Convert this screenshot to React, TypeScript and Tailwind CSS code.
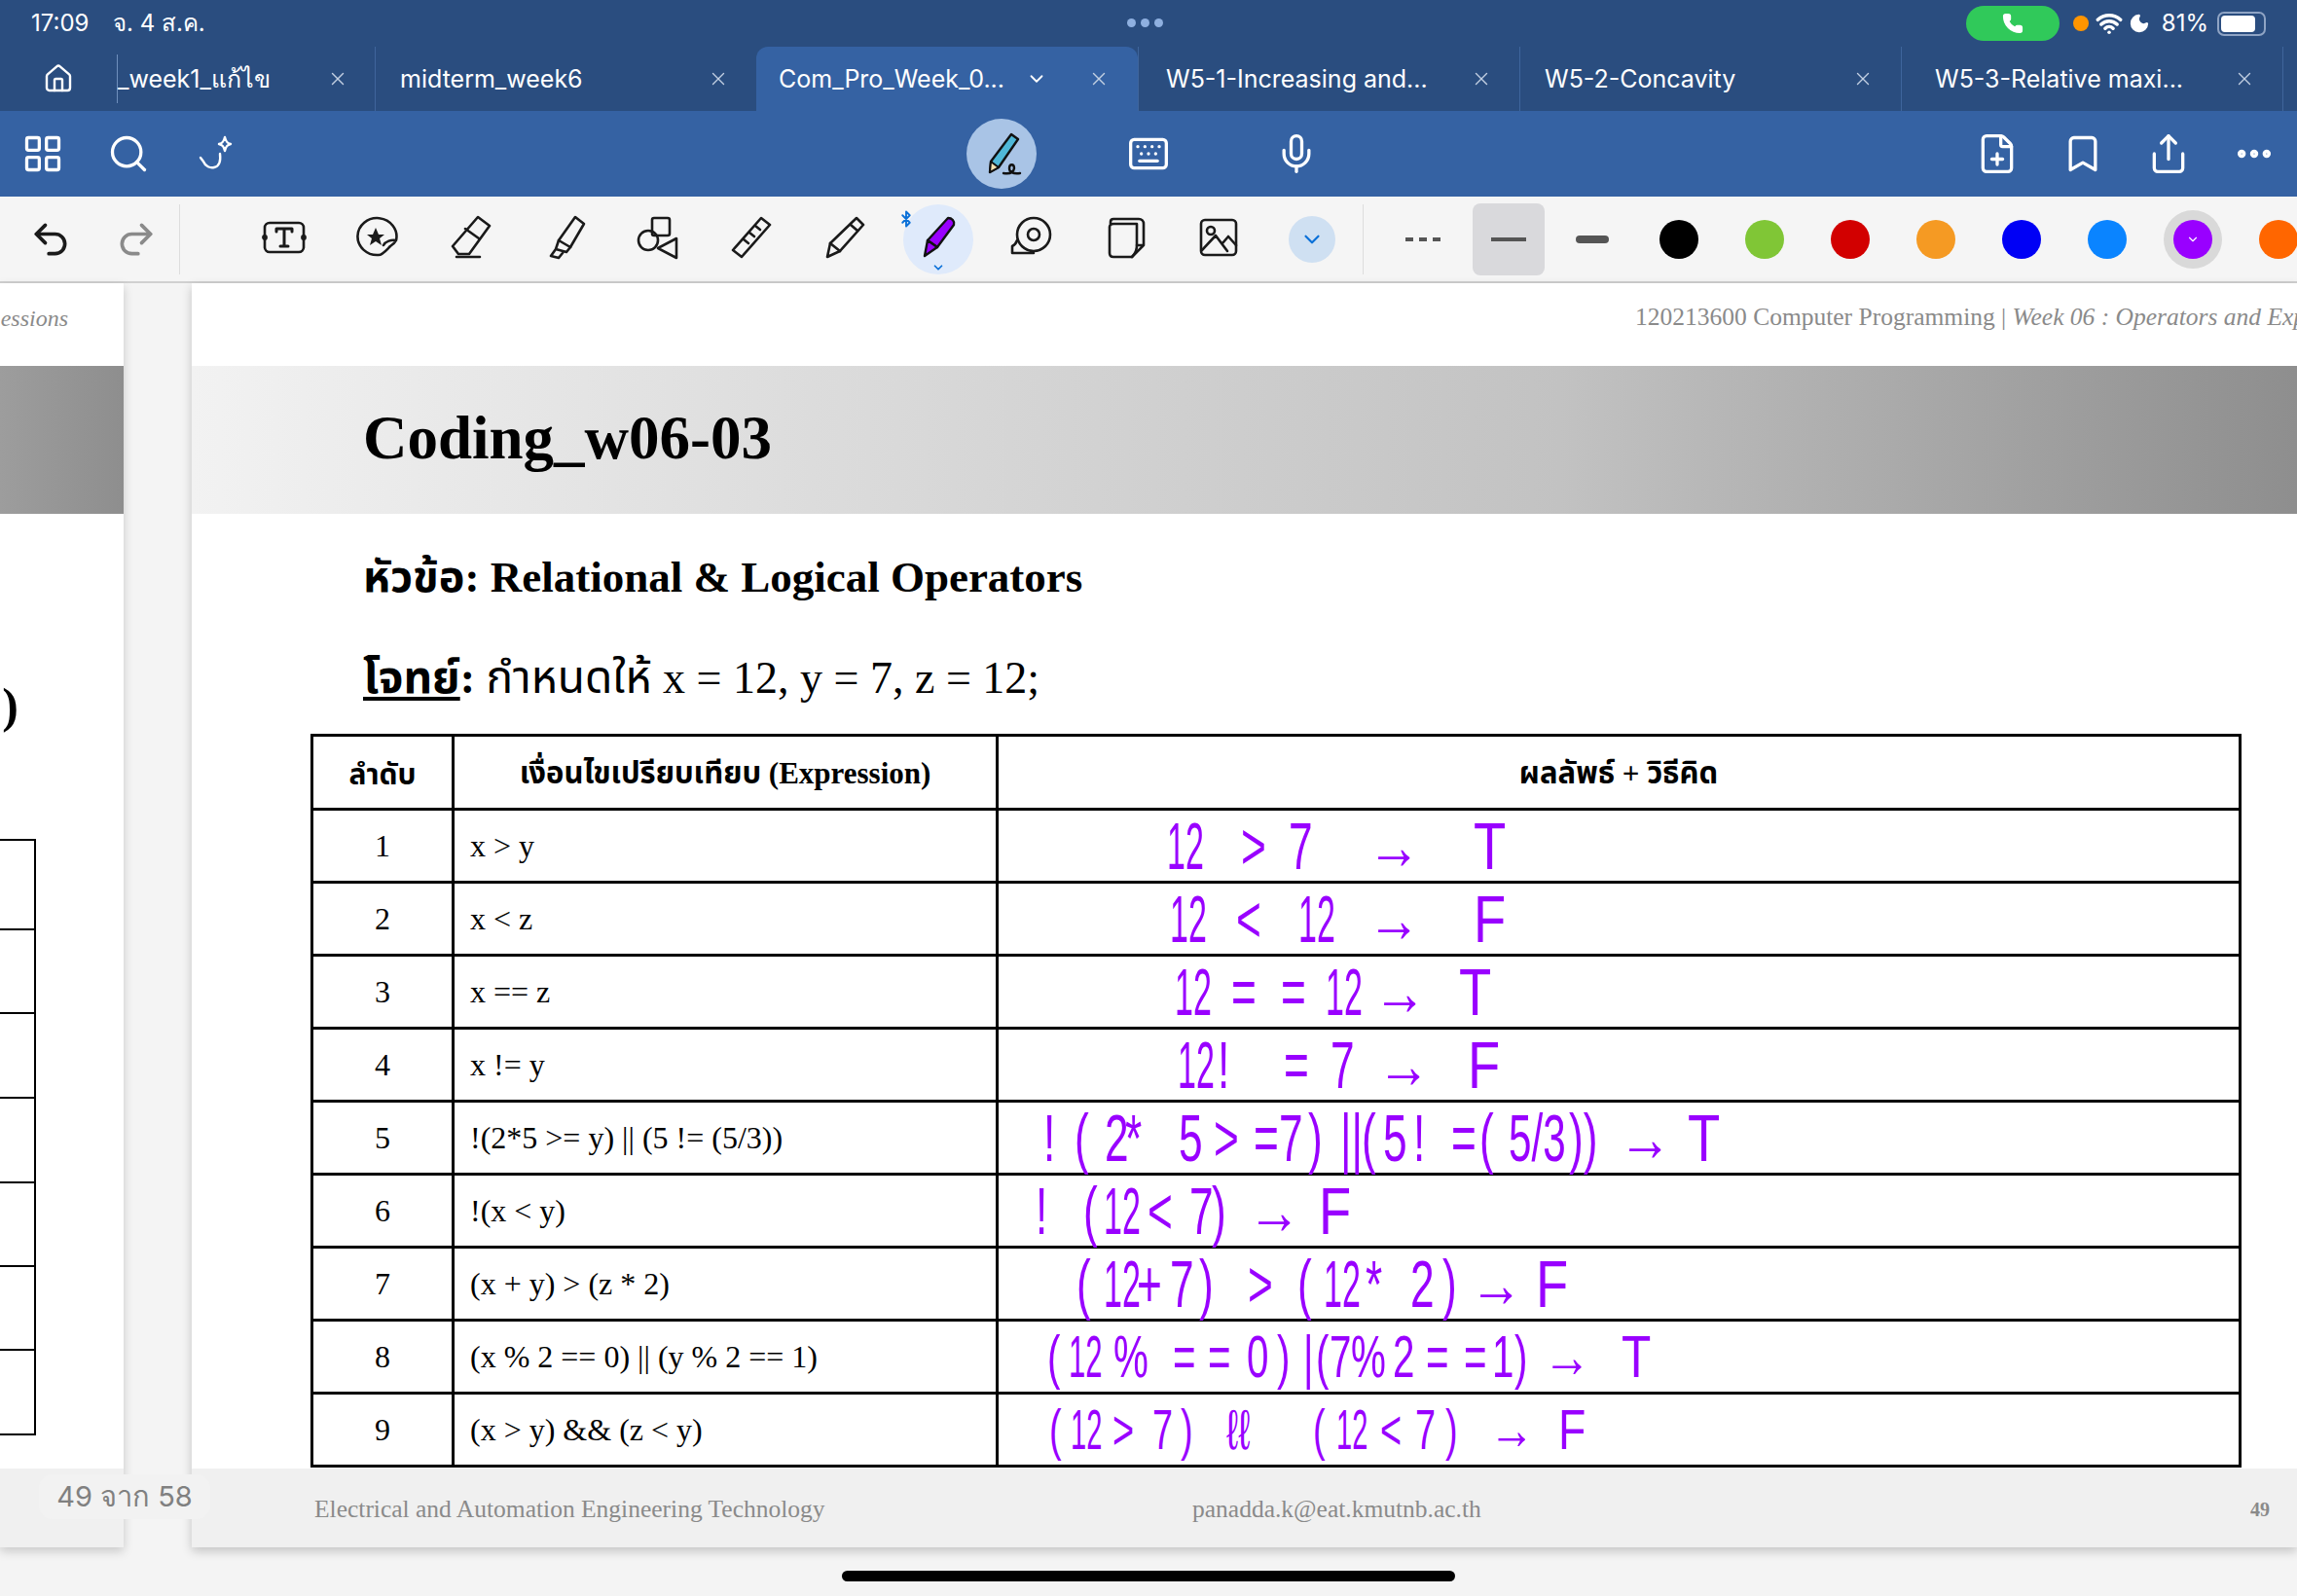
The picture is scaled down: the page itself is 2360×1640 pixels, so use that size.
import React from 'react';
import {
  Home, X, ChevronDown, LayoutGrid, Search, Keyboard, Mic, FilePlus, Bookmark, Share, Ellipsis,
  Undo2, Redo2, Phone, Wifi, Moon, Bluetooth,
} from 'lucide-react';

const serif = "font-['Liberation_Serif','Noto_Sans_Thai','Noto_Sans',serif]";

const tabs = [
  { title: 'midterm_week6', active: false, pad: 'pl-[25px]' },
  { title: 'Com_Pro_Week_0...', active: true, pad: 'pl-[23px]' },
  { title: 'W5-1-Increasing and...', active: false, pad: 'pl-[28px]' },
  { title: 'W5-2-Concavity', active: false, pad: 'pl-[25px]' },
  { title: 'W5-3-Relative maxi...', active: false, pad: 'pl-[34px]' },
];

type Tok = [string, string];
type InkRow = { no: number; expr: string; pad: string; size: string; tokens: Tok[] };

const rows: InkRow[] = [
  { no: 1, expr: 'x > y', pad: 'pl-[173px]', size: 'text-[68px]', tokens: [['12', 'w-[76px]'], ['>', 'w-[49px]'], ['7', 'w-[89px]'], ['→', 'w-[101px]'], ['T', 'w-[40px]']] },
  { no: 2, expr: 'x < z', pad: 'pl-[176px]', size: 'text-[68px]', tokens: [['12', 'w-[68px]'], ['<', 'w-[64px]'], ['12', 'w-[79px]'], ['→', 'w-[101px]'], ['F', 'w-[40px]']] },
  { no: 3, expr: 'x == z', pad: 'pl-[181px]', size: 'text-[68px]', tokens: [['12', 'w-[58px]'], ['=', 'w-[51px]'], ['=', 'w-[46px]'], ['12', 'w-[57px]'], ['→', 'w-[80px]'], ['T', 'w-[40px]']] },
  { no: 4, expr: 'x != y', pad: 'pl-[184px]', size: 'text-[68px]', tokens: [['12', 'w-[41px]'], ['!', 'w-[68px]'], ['=', 'w-[48px]'], ['7', 'w-[56px]'], ['→', 'w-[85px]'], ['F', 'w-[40px]']] },
  { no: 5, expr: '!(2*5 >= y) || (5 != (5/3))', pad: 'pl-[46px]', size: 'text-[68px]', tokens: [['!', 'w-[32px]'], ['(', 'w-[31px]'], ['2', 'w-[21px]'], ['*', 'w-[55px]'], ['5', 'w-[36px]'], ['>', 'w-[41px]'], ['=', 'w-[26px]'], ['7', 'w-[30px]'], [')', 'w-[33px]'], ['||', 'w-[22px]'], ['(', 'w-[22px]'], ['5', 'w-[31px]'], ['!', 'w-[39px]'], ['=', 'w-[29px]'], ['(', 'w-[30px]'], ['5/3', 'w-[62px]'], ['))', 'w-[59px]'], ['→', 'w-[63px]'], ['T', 'w-[40px]']] },
  { no: 6, expr: '!(x < y)', pad: 'pl-[38px]', size: 'text-[68px]', tokens: [['!', 'w-[49px]'], ['(', 'w-[21px]'], ['12', 'w-[45px]'], ['<', 'w-[43px]'], ['7', 'w-[23px]'], [')', 'w-[45px]'], ['→', 'w-[65px]'], ['F', 'w-[40px]']] },
  { no: 7, expr: '(x + y) > (z * 2)', pad: 'pl-[80px]', size: 'text-[68px]', tokens: [['(', 'w-[28px]'], ['12', 'w-[34px]'], ['+', 'w-[34px]'], ['7', 'w-[30px]'], [')', 'w-[50px]'], ['>', 'w-[51px]'], ['(', 'w-[27px]'], ['12', 'w-[43px]'], ['*', 'w-[46px]'], ['2', 'w-[33px]'], [')', 'w-[36px]'], ['→', 'w-[60px]'], ['F', 'w-[40px]']] },
  { no: 8, expr: '(x % 2 == 0) || (y % 2 == 1)', pad: 'pl-[50px]', size: 'text-[62px]', tokens: [['(', 'w-[22px]'], ['12', 'w-[46px]'], ['%', 'w-[61px]'], ['=', 'w-[36px]'], ['=', 'w-[40px]'], ['0', 'w-[31px]'], [')', 'w-[27px]'], ['|', 'w-[13px]'], ['(', 'w-[14px]'], ['7', 'w-[22px]'], ['%', 'w-[43px]'], ['2', 'w-[34px]'], ['=', 'w-[39px]'], ['=', 'w-[29px]'], ['1', 'w-[23px]'], [')', 'w-[37px]'], ['→', 'w-[73px]'], ['T', 'w-[40px]']] },
  { no: 9, expr: '(x > y) && (z < y)', pad: 'pl-[52px]', size: 'text-[58px]', tokens: [['(', 'w-[22px]'], ['12', 'w-[43px]'], ['>', 'w-[41px]'], ['7', 'w-[29px]'], [')', 'w-[47px]'], ['ℓℓ', 'w-[89px]'], ['(', 'w-[24px]'], ['12', 'w-[45px]'], ['<', 'w-[36px]'], ['7', 'w-[31px]'], [')', 'w-[53px]'], ['→', 'w-[63px]'], ['F', 'w-[40px]']] },
];

const swatches = ['bg-black', 'bg-[#80c636]', 'bg-[#d20000]', 'bg-[#f59a23]', 'bg-[#0000f5]', 'bg-[#0a84ff]'];

// ink tokens are squeezed to the tall, narrow shape of the handwriting
const inkShape = (text: string) => {
  if (text === '→') return "font-['Liberation_Sans',sans-serif] font-bold origin-left scale-x-[0.8] -translate-x-[8px]";
  if (text === '12') return 'origin-left scale-x-[0.5]';
  if (text === '5/3') return 'origin-left scale-x-[0.62]';
  if (text === 'T' || text === 'F') return 'origin-left scale-x-[0.8]';
  return 'origin-left scale-x-[0.65]';
};

const Sparkle = () => (
  <svg width="40" height="40" viewBox="0 0 40 40" fill="none" stroke="white" strokeWidth="2.4" strokeLinecap="round" strokeLinejoin="round">
    <path d="M4 24l3 4c2 5 7 7 11 6 5-1 7-6 6-14" />
    <path d="M29 3c1 4 2 6 6 7-4 1-5 3-6 7-1-4-2-6-6-7 4-1 5-3 6-7z" />
  </svg>
);

const PenCircleIcon = () => (
  <svg width="48" height="48" viewBox="0 0 48 48">
    <path d="M34 4l7 5-20 29-9 5 1-11z" fill="#4fb8d8" stroke="#111" strokeWidth="2.4" strokeLinejoin="round" />
    <path d="M13 32l8 6-9 5z" fill="#f4e2b0" stroke="#111" strokeWidth="2" strokeLinejoin="round" />
    <path d="M26 44c6 1 10 0 11-5 0-5-5-5-5 0 0 4 4 6 11 5" fill="none" stroke="#111" strokeWidth="2.4" strokeLinecap="round" />
  </svg>
);

const ToolIcon = ({ children }: { children: React.ReactNode }) => (
  <svg width="46" height="46" viewBox="0 0 46 46" fill="none" stroke="#1a1a1a" strokeWidth="2.6" strokeLinecap="round" strokeLinejoin="round">
    {children}
  </svg>
);

const tools: React.ReactNode[] = [
  <ToolIcon key="text">
    <rect x="3" y="8" width="40" height="30" rx="5" />
    <path d="M15 17v-3h16v3M23 14v18M19 32h8" strokeWidth="3" />
    <circle cx="3" cy="23" r="1.6" fill="#1a1a1a" />
    <circle cx="43" cy="23" r="1.6" fill="#1a1a1a" />
  </ToolIcon>,
  <ToolIcon key="sticker">
    <path d="M42 26A20 19 0 1 0 24 41c4 0 8-5 12-9 3-2 5-4 6-6-5-1-11 1-13 5" />
    <path d="M21 13l3 7h6l-5 4 2 7-6-4-6 4 2-7-5-4h6z" fill="#1a1a1a" stroke="none" />
  </ToolIcon>,
  <ToolIcon key="eraser">
    <path d="M30 2l12 9-21 29H10l-6-8z" />
    <path d="M17 14l14 10M8 43h24" />
  </ToolIcon>,
  <ToolIcon key="highlighter">
    <path d="M34 2l9 7-14 24-12-7z" />
    <path d="M17 26l-3 9 11 3 4-5M14 35l-5 7 8 2 4-5" />
  </ToolIcon>,
  <ToolIcon key="shapes">
    <rect x="17" y="3" width="18" height="18" rx="2" />
    <circle cx="13" cy="26" r="10" />
    <path d="M42 24v20L23 34z" />
  </ToolIcon>,
  <ToolIcon key="ruler">
    <path d="M33 3l9 7-29 33-9-7z" />
    <path d="M15 25l5 4M21 18l5 4M27 11l5 4" />
  </ToolIcon>,
  <ToolIcon key="pencil">
    <path d="M35 3l7 7-24 27-13 6 3-14z" />
    <path d="M8 29l10 8M29 10l7 6" />
  </ToolIcon>,
  <svg key="marker" width="46" height="46" viewBox="0 0 46 46">
    <path d="M33 3c4 0 7 3 6 7L22 33l-10-7z" fill="#9900ff" stroke="#111" strokeWidth="2.4" strokeLinejoin="round" />
    <path d="M12 26l10 7-13 9z" fill="#9900ff" stroke="#111" strokeWidth="2.4" strokeLinejoin="round" />
  </svg>,
  <ToolIcon key="tape">
    <circle cx="25" cy="20" r="17" />
    <circle cx="25" cy="20" r="6" />
    <path d="M8 26c-1 3-3 5-5 6v7h22" />
  </ToolIcon>,
  <ToolIcon key="sticky">
    <path d="M8 10V7c0-2 1-3 3-3h26c3 0 5 2 5 5v22l-12 12H11c-3 0-4-2-4-4V12c0-2 2-3 4-3h24v22l7 0" />
    <path d="M30 43c3-3 5-7 5-12" />
  </ToolIcon>,
  <ToolIcon key="image">
    <rect x="5" y="5" width="36" height="36" rx="4" />
    <circle cx="15" cy="16" r="4" />
    <path d="M6 36l14-15 12 16M27 29l6-7 8 9" />
  </ToolIcon>,
];

const LeftPage = () => (
  <div className="w-[127px] shrink-0 h-[1299px] bg-white flex flex-col overflow-hidden shadow-[0_4px_10px_rgba(0,0,0,0.18)]">
    <div className={`h-[71px] mb-[14px] flex items-center justify-end pr-[57px] text-[24px] italic text-[#8a8a8a] whitespace-nowrap ${serif}`}>
      essions
    </div>
    <div className="h-[152px] bg-gradient-to-r from-[#9d9d9d] to-[#8e8e8e]" />
    <div className={`h-[152px] mt-[70px] flex items-end justify-end pr-[108px] text-[50px] font-bold leading-none text-black whitespace-nowrap ${serif}`}>
      )
    </div>
    <div className="mt-[112px] w-[37px] border-[2px] border-l-0 border-black">
      <div className="h-[92px] border-b-[2px] border-black" />
      <div className="h-[86px] border-b-[2px] border-black" />
      <div className="h-[87px] border-b-[2px] border-black" />
      <div className="h-[87px] border-b-[2px] border-black" />
      <div className="h-[86px] border-b-[2px] border-black" />
      <div className="h-[86px] border-b-[2px] border-black" />
      <div className="h-[85px]" />
    </div>
    <div className="mt-auto h-[81px] bg-[#f0f0f0]" />
  </div>
);

const RightPage = () => (
  <div className={`flex-1 h-[1299px] bg-white flex flex-col overflow-hidden shadow-[0_4px_10px_rgba(0,0,0,0.2)] ${serif}`}>
    <div className="h-[71px] mb-[14px] shrink-0 flex items-center pl-[1483px] text-[25.5px] text-[#8a8a8a] whitespace-nowrap">
      120213600 Computer Programming |&nbsp;<i>Week 06 : Operators and Expressions</i>
    </div>
    <div className="h-[152px] shrink-0 flex items-center pl-[176px] pb-[3px] bg-gradient-to-r from-[#f2f2f2] via-[#c2c2c2] via-65% to-[#8e8e8e]">
      <h1 className="text-[63px] font-bold text-black leading-none">Coding_w06-03</h1>
    </div>
    <div className="pl-[176px] pt-[39px] h-[139px] text-[45px] font-bold text-black leading-[52px] whitespace-nowrap">
      หัวข้อ: Relational &amp; Logical Operators
    </div>
    <div className="pl-[176px] h-[87px] text-[46px] text-black leading-[60px] whitespace-nowrap">
      <b className="underline underline-offset-4">โจทย์</b><b>:</b> กำหนดให้ x = 12, y = 7, z = 12;
    </div>
    <div className="pl-[122px]">
      <table className="w-[1984px] table-fixed border-collapse border-[3px] border-black text-black">
        <thead>
          <tr className="h-[76px]">
            <th className="w-[145px] pt-[3px] border-[3px] border-black text-[30px] font-bold">ลำดับ</th>
            <th className="w-[559px] pt-[3px] border-[3px] border-black text-[31px] font-bold">เงื่อนไขเปรียบเทียบ (Expression)</th>
            <th className="pt-[3px] border-[3px] border-black text-[31px] font-bold">ผลลัพธ์ + วิธีคิด</th>
          </tr>
        </thead>
        <tbody>
          {rows.map((row) => (
            <tr key={row.no} className="h-[75px]">
              <td className="border-[3px] border-black text-center text-[32px] leading-none">{row.no}</td>
              <td className="border-[3px] border-black pl-[16px] text-[32px] leading-none">{row.expr}</td>
              <td className="border-[3px] border-black p-0">
                <div className={`flex items-center h-[69px] font-['Liberation_Sans_Narrow','Liberation_Sans',sans-serif] leading-none text-[#9900ff] ${row.pad} ${row.size}`}>
                  {row.tokens.map(([text, width], i) => (
                    <span key={i} className={`block shrink-0 whitespace-nowrap ${inkShape(text)} ${width}`}>{text}</span>
                  ))}
                </div>
              </td>
            </tr>
          ))}
        </tbody>
      </table>
    </div>
    <div className="mt-auto h-[81px] shrink-0 bg-[#f0f0f0] flex items-center pt-[3px] pl-[126px] pr-[28px] text-[25.5px] text-[#8a8a8a]">
      <span className="w-[902px]">Electrical and Automation Engineering Technology</span>
      <span>panadda.k@eat.kmutnb.ac.th</span>
      <span className="ml-auto text-[20px] font-bold">49</span>
    </div>
  </div>
);

export default function App() {
  return (
    <div className="relative w-[2360px] h-[1640px] overflow-hidden flex flex-col bg-[#f4f4f4] font-['Inter','Noto_Sans',sans-serif]">
      {/* status bar + tabs */}
      <div className="bg-[#2a4d7f] shrink-0">
        <div className="relative h-[48px] flex items-center pl-[32px] pr-[32px] text-white text-[24px]">
          <span className="w-[84px]">17:09</span>
          <span>จ. 4 ส.ค.</span>
          <div className="absolute left-[1158px] top-[19px] flex gap-[5px]">
            <span className="w-[9px] h-[9px] rounded-full bg-[#8fb0e0]" />
            <span className="w-[9px] h-[9px] rounded-full bg-[#8fb0e0]" />
            <span className="w-[9px] h-[9px] rounded-full bg-[#8fb0e0]" />
          </div>
          <div className="ml-auto flex items-center">
            <span className="w-[96px] h-[36px] rounded-full bg-[#30c95a] flex items-center justify-center">
              <Phone size={22} fill="white" stroke="white" />
            </span>
            <span className="ml-[14px] w-[16px] h-[16px] rounded-full bg-[#ff9500]" />
            <Wifi size={28} stroke="white" strokeWidth={3} className="ml-[7px]" />
            <Moon size={22} fill="white" stroke="white" className="ml-[6px]" />
            <span className="ml-[12px]">81%</span>
            <span className="ml-[9px] w-[50px] h-[25px] rounded-[7px] border-[2px] border-[#8fa4c4] p-[2px]">
              <span className="block w-[35px] h-full rounded-[4px] bg-white" />
            </span>
          </div>
        </div>
        <div className="flex h-[66px] text-[25px] text-white">
          <div className="w-[120px] flex items-center justify-center">
            <Home size={32} strokeWidth={1.8} />
          </div>
          <div className="w-[265px] flex items-center border-l border-[#6f8fbd] my-[8px] relative">
            <span className="whitespace-nowrap pt-[2px]">_week1_แก้ไข</span>
            <X size={22} strokeWidth={1.5} className="absolute left-[215px] text-[#c2cfe2]" />
          </div>
          {tabs.map((tab) =>
            tab.active ? (
              <div key={tab.title} className={`w-[392px] shrink-0 flex items-center bg-[#3562a3] rounded-t-[12px] relative ${tab.pad}`}>
                <span className="whitespace-nowrap pt-[2px]">{tab.title}</span>
                <ChevronDown size={22} className="absolute left-[277px]" />
                <X size={22} strokeWidth={1.5} className="absolute left-[341px] text-[#c2cfe2]" />
              </div>
            ) : (
              <div key={tab.title} className={`w-[392px] shrink-0 flex items-center border-l border-[#3f659c] relative ${tab.pad}`}>
                <span className="whitespace-nowrap pt-[2px]">{tab.title}</span>
                <X size={22} strokeWidth={1.5} className="absolute left-[341px] text-[#c2cfe2]" />
              </div>
            ),
          )}
          <div className="flex-1 border-l border-[#3f659c]" />
        </div>
      </div>

      {/* ribbon */}
      <div className="relative h-[88px] shrink-0 bg-[#3562a3] flex items-center text-white">
        <div className="flex items-center pl-[22px]">
          <LayoutGrid size={44} strokeWidth={1.8} />
          <Search size={44} strokeWidth={1.8} className="ml-[44px]" />
          <span className="ml-[48px]"><Sparkle /></span>
        </div>
        <div className="absolute left-[993px] top-[8px] w-[72px] h-[72px] rounded-full bg-[#a9c4e6] flex items-center justify-center">
          <PenCircleIcon />
        </div>
        <Keyboard size={44} strokeWidth={1.8} className="absolute left-[1158px] top-[22px]" />
        <Mic size={44} strokeWidth={1.8} className="absolute left-[1310px] top-[22px]" />
        <div className="ml-auto flex items-center gap-[44px] pr-[22px]">
          <FilePlus size={44} strokeWidth={1.8} />
          <Bookmark size={44} strokeWidth={1.8} />
          <Share size={44} strokeWidth={1.8} />
          <Ellipsis size={44} strokeWidth={2.6} />
        </div>
      </div>

      {/* pen tools */}
      <div className="h-[89px] shrink-0 bg-[#f5f5f5] border-b-[2px] border-[#d0d0d0] flex items-center overflow-hidden">
        <div className="w-[185px] h-[72px] flex items-center pl-[30px] gap-[44px] border-r border-[#dddddd] shrink-0">
          <Undo2 size={44} strokeWidth={2} className="text-[#1a1a1a]" />
          <Redo2 size={44} strokeWidth={2} className="text-[#8a8a8a]" />
        </div>
        <div className="flex pl-[59px]">
          {tools.map((icon, i) => (
            <div key={i} className="w-[96px] h-[72px] flex items-center justify-center relative">
              {i === 7 && (
                <>
                  <span className="absolute left-[12px] top-0 w-[72px] h-[72px] rounded-full bg-[#dfeafb]" />
                  <Bluetooth size={18} strokeWidth={2.5} className="absolute left-[6px] top-[6px] text-[#0a70d8]" />
                  <ChevronDown size={14} strokeWidth={3} className="absolute left-[41px] top-[58px] text-[#0a70d8]" />
                </>
              )}
              <span className="relative -mt-[4px]">{icon}</span>
            </div>
          ))}
          <div className="w-[96px] h-[72px] flex items-center justify-center">
            <span className="w-[48px] h-[48px] rounded-full bg-[#cfe0f2] flex items-center justify-center">
              <ChevronDown size={26} className="text-[#0a70d8]" />
            </span>
          </div>
        </div>
        <div className="ml-[4px] h-[72px] border-l border-[#dddddd] flex items-center shrink-0">
          <span className="ml-[43px] w-[36px] border-t-[4px] border-dashed border-[#555555]" />
          <span className="ml-[33px] w-[74px] h-[74px] rounded-[8px] bg-[#d9d9dc] flex items-center justify-center">
            <span className="w-[36px] h-[4px] bg-[#555555]" />
          </span>
          <span className="ml-[32px] w-[34px] h-[8px] rounded-full bg-[#555555]" />
          <div className="ml-[52px] flex gap-[48px]">
            {swatches.map((c) => (
              <span key={c} className={`w-[40px] h-[40px] rounded-full ${c}`} />
            ))}
            <span className="w-[40px] h-[40px] rounded-full bg-[#9900ff] flex items-center justify-center ring-[10px] ring-[#d9d9d9]">
              <ChevronDown size={14} className="text-white" />
            </span>
            <span className="w-[40px] h-[40px] rounded-full bg-[#ff6600] shrink-0" />
          </div>
        </div>
      </div>

      {/* document */}
      <div className="relative flex-1 flex gap-[70px] items-start">
        <LeftPage />
        <RightPage />
        <div className="absolute left-[40px] top-[1224px] w-[176px] h-[46px] rounded-[14px] bg-[#f2f2f2] flex items-center justify-center text-[29px] text-[#808080]">
          49 จาก 58
        </div>
      </div>

      <div className="absolute left-[865px] top-[1614px] w-[630px] h-[11px] rounded-full bg-black" />
    </div>
  );
}
